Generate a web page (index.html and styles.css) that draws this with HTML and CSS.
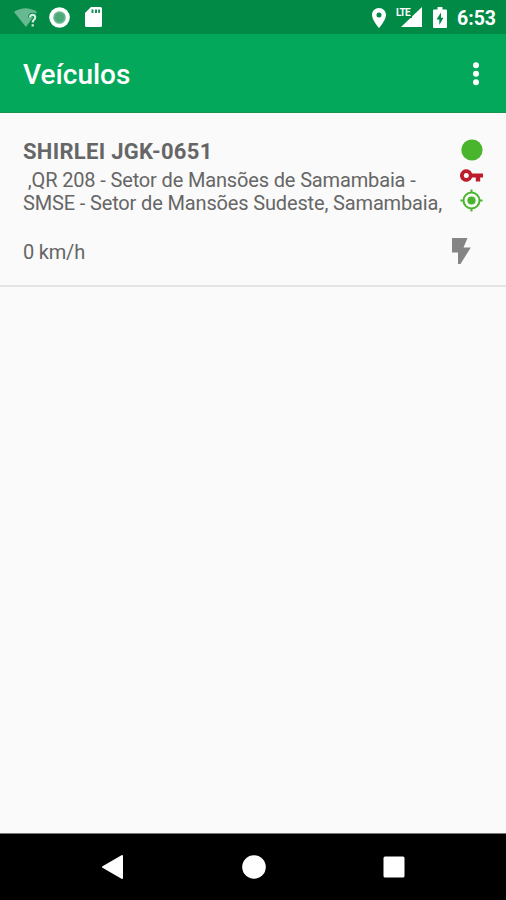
FILE: index.html
```html
<!DOCTYPE html>
<html lang="pt-BR">
<head>
    <meta charset="UTF-8">
    <meta name="viewport" content="width=device-width, initial-scale=1.0">
    <title>Veículos</title>
    <link rel="stylesheet" href="styles.css">
</head>
<body>
    <!-- Status Bar -->
    <div class="status-bar">
        <div class="status-left">
            <svg class="icon-wifi" width="24" height="20" viewBox="0 0 24 20">
                <path d="M0 4Q11.500 -3.500 23 4L12 19Z" fill="#fff" opacity="0.4"/>
                <path d="M16 9.500Q16 6.800 18.600 6.800Q21.200 6.800 21.200 9.300Q21.200 10.800 19.800 12Q18.700 13 18.700 15" fill="none" stroke="#008a46" stroke-width="4"/>
                <path d="M16 9.500Q16 6.800 18.600 6.800Q21.200 6.800 21.200 9.300Q21.200 10.800 19.800 12Q18.700 13 18.700 14.500M18.700 16.300V18.600" fill="none" stroke="#d5ecdf" stroke-width="2.200"/>
            </svg>
            <svg class="icon-sync" width="21" height="21" viewBox="0 0 21 21">
                <circle cx="10.500" cy="10.500" r="10.300" fill="#fff"/>
                <circle cx="10.500" cy="10.500" r="6.300" fill="#66b78d"/>
                <circle cx="10.500" cy="10.500" r="4.600" fill="#4da97a"/>
            </svg>
            <svg class="icon-card" width="17" height="20" viewBox="0 0 17 20">
                <path d="M6 0H15.500Q17 0 17 1.500V18.500Q17 20 15.500 20H1.500Q0 20 0 18.500V6Z" fill="#fff"/>
                <path d="M6.500 2.500H8.500V6H6.500ZM10 2.500H12V6H10ZM13.200 2.500H15V6H13.200Z" fill="#1b8f54"/>
            </svg>
        </div>
        <div class="status-right">
            <svg class="icon-pin" width="14" height="20" viewBox="0 0 14 20">
                <path d="M7 0C3.100 0 0 3 0 7C0 12 7 20 7 20S14 12 14 7C14 3 10.900 0 7 0ZM7 4.500A2.500 2.500 0 1 1 7 9.500A2.500 2.500 0 1 1 7 4.500Z" fill="#fff" fill-rule="evenodd"/>
            </svg>
            <div class="signal">
                <span class="network">LTE</span>
                <svg width="21" height="20" viewBox="0 0 21 20">
                    <path d="M21 0V20H0L9.500 11H11V9.500Z" fill="#fff"/>
                </svg>
            </div>
            <svg class="icon-battery" width="14" height="21" viewBox="0 0 14 21">
                <path d="M4.500 0H9.500V2.500H13Q14 2.500 14 3.500V20Q14 21 13 21H1Q0 21 0 20V3.500Q0 2.500 1 2.500H4.500Z" fill="#fff"/>
                <path d="M8 5.500L3.500 12.500H6.300V18L10.500 10.800H8Z" fill="#008a46"/>
            </svg>
            <span class="time">6:53</span>
        </div>
    </div>

    <!-- App Bar -->
    <header class="app-bar">
        <h1>Veículos</h1>
        <svg class="menu" width="6" height="24" viewBox="0 0 6 24">
            <circle cx="3" cy="3.300" r="3" fill="#fff"/>
            <circle cx="3" cy="11.800" r="3" fill="#fff"/>
            <circle cx="3" cy="20.300" r="3" fill="#fff"/>
        </svg>
    </header>

    <!-- Vehicle List -->
    <main class="vehicles">
        <div class="vehicle">
            <div class="info">
                <h2>SHIRLEI JGK-0651</h2>
                <p class="address">&nbsp;,QR 208 - Setor de Mansões de Samambaia -<br>SMSE - Setor de Mansões Sudeste, Samambaia,</p>
                <p class="speed">0 km/h</p>
            </div>
            <div class="indicators">
                <svg width="22" height="22" viewBox="0 0 22 22">
                    <circle cx="11" cy="11" r="10.600" fill="#49b52c"/>
                </svg>
                <svg class="icon-key" width="23" height="13" viewBox="0 0 23 13">
                    <path d="M12.200 4.400A6.300 6.300 0 1 0 12.200 8.600H15.800V12.600H20.200V8.600H23V4.400ZM6.300 4A2.500 2.500 0 1 1 6.300 9A2.500 2.500 0 1 1 6.300 4Z" fill="#bd1c2b" fill-rule="evenodd"/>
                </svg>
                <svg class="icon-target" width="23" height="23" viewBox="0 0 23 23">
                    <g fill="none" stroke="#49b52c" stroke-width="2">
                        <circle cx="11.500" cy="11.500" r="8"/>
                        <path d="M11.500 0.500V4M11.500 19V22.500M0.500 11.500H4M19 11.500H22.500"/>
                    </g>
                    <circle cx="11.500" cy="11.500" r="4.100" fill="#49b52c"/>
                </svg>
                <svg class="icon-bolt" width="19" height="26" viewBox="0 0 19 26">
                    <path d="M0 0H15.500L11.500 9.500H18.800L8.500 26H6V14.500H0Z" fill="#858585"/>
                </svg>
            </div>
        </div>
    </main>

    <!-- Navigation Bar -->
    <nav class="nav-bar">
        <svg width="24" height="24" viewBox="0 0 24 24">
            <path d="M21 1V23L2 12Z" fill="#fff" stroke="#fff" stroke-width="2" stroke-linejoin="round"/>
        </svg>
        <svg width="24" height="24" viewBox="0 0 24 24">
            <circle cx="12" cy="12" r="11.800" fill="#fff"/>
        </svg>
        <svg width="24" height="24" viewBox="0 0 24 24">
            <rect x="1.500" y="1.500" width="21" height="21" rx="1.500" fill="#fff"/>
        </svg>
    </nav>
</body>
</html>
```
FILE: styles.css
```css
/* Global Styles */
* {
    box-sizing: border-box;
}

body {
    display: flex;
    flex-direction: column;
    height: 900px;
    margin: 0;
    overflow: hidden;
    background-color: #fafafa;
    color: #666;
    font-family: Roboto, sans-serif;
}

h1,
h2,
p {
    margin: 0;
    white-space: nowrap;
}

svg {
    display: block;
    flex-shrink: 0;
}

/* Status Bar */
.status-bar {
    display: flex;
    justify-content: space-between;
    height: 34px;
    padding: 7px 11px 0 14px;
    background-color: #008a46;
    color: #fff;
}

.status-left,
.status-right {
    display: flex;
    align-items: flex-start;
}

.icon-wifi {
    margin-top: 1px;
}

.icon-sync {
    margin-left: 11px;
}

.icon-card {
    margin-left: 15px;
}

.icon-pin {
    margin-top: 1px;
}

.signal {
    position: relative;
    margin-left: 15px;
}

.network {
    position: absolute;
    top: 0;
    left: -5px;
    font-size: 10px;
    font-weight: 700;
    line-height: 11px;
    letter-spacing: -0.8px;
}

.icon-battery {
    margin-left: 11px;
}

.time {
    width: 38px;
    margin-left: 10px;
    font-size: 19.5px;
    font-weight: 700;
    line-height: 23px;
}

/* App Bar */
.app-bar {
    display: flex;
    justify-content: space-between;
    align-items: center;
    height: 79px;
    padding: 2px 27px 0 23px;
    background-color: #03a85a;
    border-bottom: 1px solid #159650;
    color: #fff;
}

.app-bar h1 {
    padding-top: 2px;
    font-size: 28px;
    font-weight: 500;
    line-height: 34px;
}

/* Vehicle List */
.vehicles {
    flex: 1;
}

.vehicle {
    display: flex;
    justify-content: space-between;
    height: 174px;
    padding: 26px 23px 0;
    border-bottom: 2px solid #e4e4e4;
}

.info h2 {
    font-size: 22px;
    font-weight: 700;
    line-height: 26px;
    letter-spacing: 0.3px;
}

.address {
    margin-top: 4px;
    font-size: 20px;
    line-height: 23px;
    letter-spacing: -0.15px;
}

.speed {
    margin-top: 26px;
    font-size: 20px;
    line-height: 23px;
    letter-spacing: -0.2px;
}

.indicators {
    display: flex;
    flex-direction: column;
    align-items: center;
    width: 23px;
}

.icon-key {
    margin-top: 8px;
}

.icon-target {
    margin-top: 7px;
}

.icon-bolt {
    align-self: flex-end;
    margin: 26px 12px 0 0;
}

/* Navigation Bar */
.nav-bar {
    display: flex;
    justify-content: space-between;
    align-items: center;
    height: 67px;
    padding: 0 100px 0 101px;
    background-color: #000;
    border-top: 1px solid #777;
}
```
